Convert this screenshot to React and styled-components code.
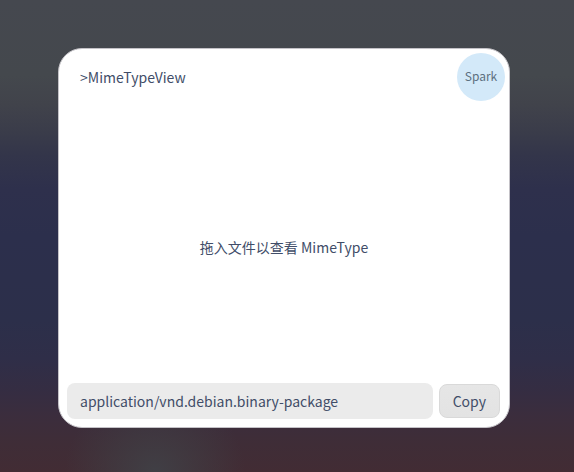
import React from "react";
import styled, { createGlobalStyle } from "styled-components";

const GlobalStyle = createGlobalStyle`
  * {
    box-sizing: border-box;
  }
  body {
    margin: 0;
    color: #414d68;
    font-family: "Noto Sans CJK SC", sans-serif;
    font-size: 14px;
    line-height: 22px;
  }
`;

const Desktop = styled.div`
  display: flex;
  min-height: 100vh;
  padding: 48px 64px 44px 58px;
  background:
    radial-gradient(ellipse 90px 84px at 27% 100%, #403f45 0%, #403f4500 100%),
    linear-gradient(
      to bottom,
      #45484f 0%,
      #44484d 16%,
      #41434b 22%,
      #3a3c4a 28%,
      #33354a 33%,
      #2e304c 40%,
      #2c2f4c 50%,
      #2c2f4a 68%,
      #2f2e48 76%,
      #352d42 83%,
      #3b2d3d 88%,
      #3f2d37 94%,
      #422c34 100%
    );
`;

const Window = styled.main`
  display: flex;
  flex: 1;
  flex-direction: column;
  padding: 4px 4px 8px 8px;
  background: #fff;
  border: 1px solid #c4c2c7;
  border-radius: 24px;
`;

const Header = styled.header`
  display: flex;
  align-items: center;
  justify-content: space-between;
  padding-left: 13px;
`;

const Title = styled.h1`
  margin: 0;
  font-size: inherit;
  font-weight: 400;
`;

const Logo = styled.div`
  display: grid;
  place-items: center;
  width: 48px;
  height: 48px;
  padding-bottom: 2px;
  border-radius: 50%;
  background: #d3e9f9;
  color: #5d7080;
  font-size: 12px;
`;

const DropArea = styled.section`
  display: flex;
  flex: 1;
  align-items: center;
  justify-content: center;
  padding: 10px 4px 0 0;
`;

const ResultRow = styled.footer`
  display: flex;
  align-items: center;
  gap: 6px;
  padding-right: 5px;
`;

const MimeField = styled.input`
  flex: 1;
  min-width: 0;
  height: 36px;
  padding: 0 13px;
  border: 0;
  border-radius: 8px;
  outline: none;
  background: #ebebeb;
  color: inherit;
  font: inherit;
`;

const CopyButton = styled.button`
  height: 34px;
  padding: 0 13px;
  border: 1px solid #d9d9d9;
  border-radius: 8px;
  background: linear-gradient(to bottom, #e6e6e6, #e3e3e3);
  color: inherit;
  font: inherit;
`;

export default function App() {
  return (
    <>
      <GlobalStyle />
      <Desktop>
        <Window>
          <Header>
            <Title>&gt;MimeTypeView</Title>
            <Logo>Spark</Logo>
          </Header>
          <DropArea>拖入文件以查看 MimeType</DropArea>
          <ResultRow>
            <MimeField
              aria-label="MimeType"
              readOnly
              value="application/vnd.debian.binary-package"
            />
            <CopyButton type="button">Copy</CopyButton>
          </ResultRow>
        </Window>
      </Desktop>
    </>
  );
}
